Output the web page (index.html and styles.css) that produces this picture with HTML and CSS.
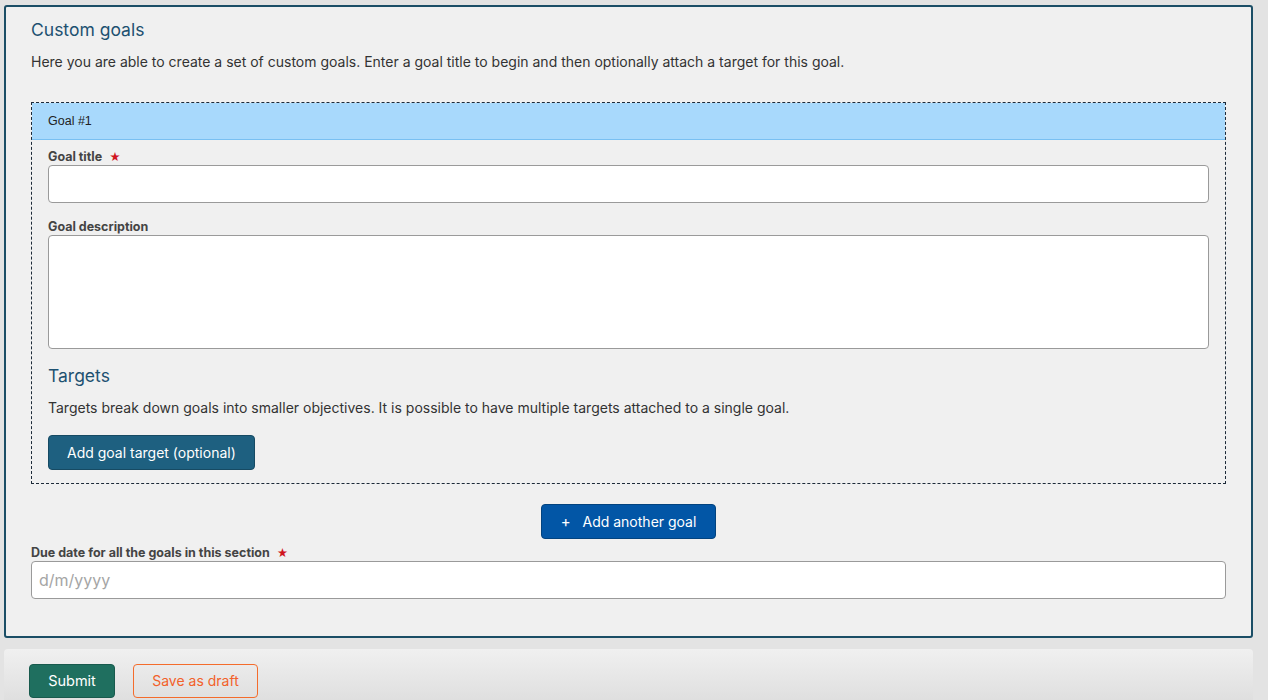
FILE: index.html
```html
<!DOCTYPE html>
<html lang="en">
<head>
    <meta charset="UTF-8">
    <meta name="viewport" content="width=device-width, initial-scale=1.0">
    <title>Custom goals</title>
    <link rel="stylesheet" href="styles.css">
</head>
<body>
    <div class="page">
        <div class="section-card">
            <h2 class="section-title">Custom goals</h2>
            <p class="section-intro">Here you are able to create a set of custom goals. Enter a goal title to begin and then optionally attach a target for this goal.</p>

            <div class="goal-box">
                <div class="goal-header">Goal #1</div>
                <div class="goal-body">
                    <div class="field">
                        <label class="field-label">Goal title <span class="required">&#9733;</span></label>
                        <input type="text" class="text-input">
                    </div>
                    <div class="field">
                        <label class="field-label">Goal description</label>
                        <textarea class="text-area"></textarea>
                    </div>

                    <h3 class="sub-title">Targets</h3>
                    <p class="sub-intro">Targets break down goals into smaller objectives. It is possible to have multiple targets attached to a single goal.</p>
                    <button class="btn btn-target">Add goal target (optional)</button>
                </div>
            </div>

            <div class="add-row">
                <button class="btn btn-add"><span class="plus">+</span> Add another goal</button>
            </div>

            <div class="field due-field">
                <label class="field-label">Due date for all the goals in this section <span class="required">&#9733;</span></label>
                <input type="text" class="text-input" placeholder="d/m/yyyy">
            </div>
        </div>

        <div class="form-actions">
            <button class="btn btn-submit">Submit</button>
            <button class="btn btn-draft">Save as draft</button>
        </div>
    </div>
</body>
</html>
```

FILE: styles.css
```css
* {
    margin: 0;
    padding: 0;
    box-sizing: border-box;
    font-family: 'Inter', 'Noto Sans', sans-serif;
}

body {
    background-color: #e3e3e3;
    color: #333;
}

.page {
    padding: 5px 15px 0 4px;
}

.section-card {
    background-color: #f0f0f0;
    border: 2px solid #1b4e66;
    border-radius: 3px;
    padding: 11px 25px 37px 25px;
}

.section-title {
    color: #1d5171;
    font-size: 17.5px;
    font-weight: 400;
    line-height: 24px;
}

.section-intro {
    font-size: 14px;
    line-height: 20px;
    margin-top: 10px;
    color: #333;
}

.goal-box {
    margin-top: 30px;
    border: 1px dashed #1c2a38;
}

.goal-header {
    background-color: #a8d9fc;
    border-bottom: 1px solid #79c0f2;
    height: 37px;
    line-height: 36px;
    padding-left: 16px;
    font-family: 'Liberation Sans', Arial, sans-serif;
    font-size: 12.5px;
    color: #222;
}

.goal-body {
    padding: 9px 16px 13px 16px;
}

.field {
    margin-bottom: 16px;
}

.field-label {
    display: block;
    font-size: 12.5px;
    font-weight: 700;
    color: #444;
    line-height: 16px;
}

.required {
    color: #d0151f;
    font-size: 11px;
    margin-left: 4px;
}

.text-input {
    display: block;
    width: 100%;
    height: 38px;
    background-color: #fff;
    border: 1px solid #9a9a9a;
    border-radius: 4px;
    padding: 0 7px;
    font-size: 16px;
    color: #333;
}

.text-input::placeholder {
    color: #a5a5a5;
}

.text-area {
    display: block;
    width: 100%;
    height: 114px;
    background-color: #fff;
    border: 1px solid #9a9a9a;
    border-radius: 4px;
    resize: none;
}

.sub-title {
    color: #1d5171;
    font-size: 17.5px;
    font-weight: 400;
    line-height: 24px;
    margin-top: -1px;
}

.sub-intro {
    font-size: 14px;
    line-height: 20px;
    margin-top: 10px;
}

.btn {
    font-size: 14px;
    border-radius: 4px;
    cursor: pointer;
    line-height: 20px;
}

.btn-target {
    margin-top: 17px;
    height: 35px;
    padding: 0 18px;
    background-color: #1e6080;
    border: 1px solid #164a63;
    color: #fff;
}

.add-row {
    display: flex;
    justify-content: center;
    margin-top: 20px;
}

.btn-add {
    height: 35px;
    width: 175px;
    background-color: #0256a6;
    border: 1px solid #02437f;
    color: #fff;
}

.plus {
    font-size: 15px;
    margin-right: 8px;
}

.due-field {
    margin-top: 6px;
    margin-bottom: 0;
}

.form-actions {
    margin-top: 11px;
    height: 60px;
    border-radius: 4px 4px 0 0;
    background: linear-gradient(#f0f0f0, #dcdcdc);
    padding: 15px 25px;
    display: flex;
    gap: 18px;
}

.btn-submit {
    height: 34px;
    width: 86px;
    background-color: #1f6f5f;
    border: 1px solid #185a4d;
    color: #fff;
    font-size: 14.5px;
}

.btn-draft {
    height: 34px;
    width: 125px;
    background-color: transparent;
    border: 1px solid #f46c2c;
    color: #f2612a;
}
```
